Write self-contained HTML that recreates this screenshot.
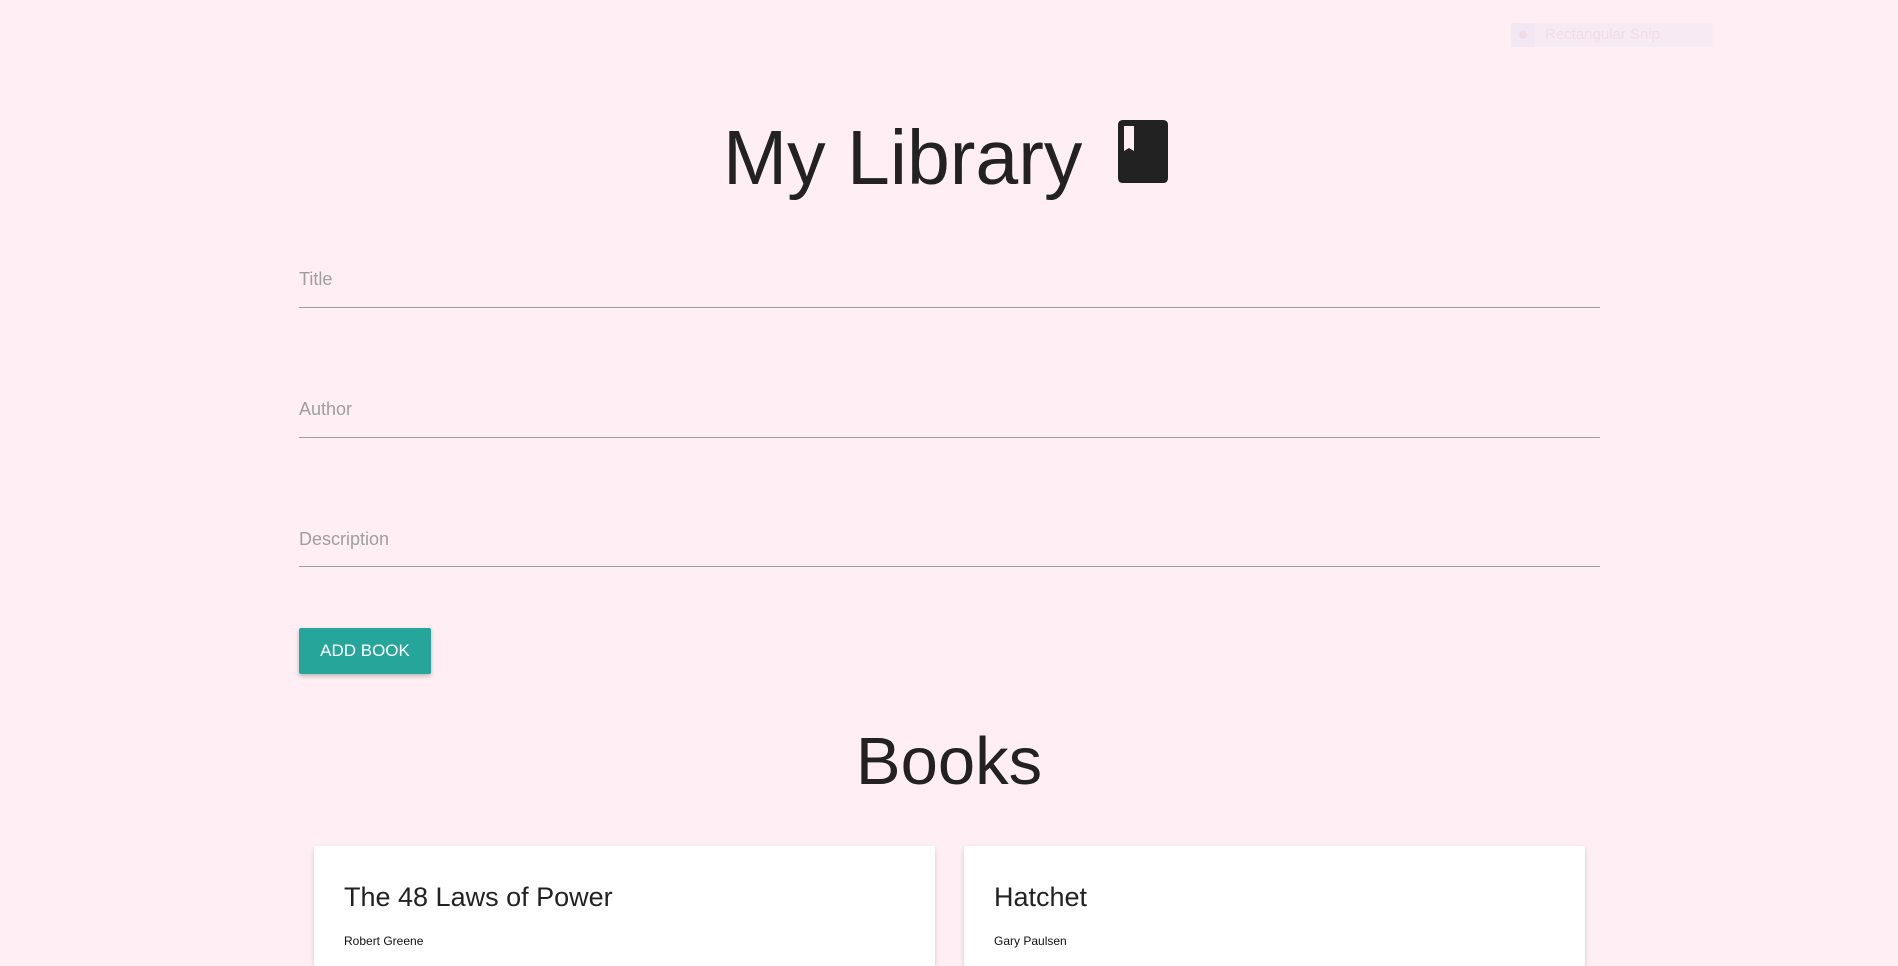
<!DOCTYPE html>
<html><head><meta charset="utf-8"><style>
body{margin:0;width:1898px;height:942px;overflow:hidden;background:#ffeff4;font-family:"Liberation Sans",sans-serif;color:#222;position:relative}
.a{position:absolute}
h1{position:absolute;left:723px;top:103px;margin:0;font-weight:normal;font-size:77px;line-height:110px;white-space:nowrap}
.lbl{position:absolute;left:299px;font-size:18px;color:#9e9e9e}
.line{position:absolute;left:299px;width:1301px;height:1px;background:#9e9e9e}
.btn{position:absolute;left:299px;top:628px;width:132px;height:46px;background:#26a69a;color:#fff;font-size:17px;line-height:46px;text-align:center;border-radius:2px;box-shadow:0 2px 4px rgba(0,0,0,.25)}
.card{position:absolute;top:846px;width:621px;height:120px;background:#fff;border-radius:2px;box-shadow:0 2px 5px rgba(0,0,0,.16)}
.card .t{position:absolute;left:30px;top:36px;font-size:27px;color:#222}
.card .s{position:absolute;left:30px;top:88px;font-size:12px;color:#111}
</style></head><body>
<div class="a" style="left:1511px;top:23px;width:202px;height:24px;background:#f7eaf2"></div>
<div class="a" style="left:1511px;top:23px;width:24px;height:24px;background:#f1e8f3"></div>
<div class="a" style="left:1519px;top:31px;width:8px;height:8px;border-radius:50%;background:#f2dbe5"></div>
<div class="a" style="left:1545px;top:26px;font-size:15px;color:#f0dde6">Rectangular Snip</div>
<h1>My Library</h1>
<svg class="a" style="left:1118px;top:120px" width="50" height="63" viewBox="0 0 50 63"><path d="M5 0H45Q50 0 50 5V58Q50 63 45 63H5Q0 63 0 58V5Q0 0 5 0Z M6 6V31L11 28L16 31V6Z" fill="#222" fill-rule="evenodd"/></svg>
<div class="lbl" style="top:269px">Title</div><div class="line" style="top:307px"></div>
<div class="lbl" style="top:399px">Author</div><div class="line" style="top:437px"></div>
<div class="lbl" style="top:529px">Description</div><div class="line" style="top:566px"></div>
<div class="btn">ADD BOOK</div>
<div class="a" style="left:0;width:1898px;text-align:center;top:722px;font-size:67px;line-height:80px">Books</div>
<div class="card" style="left:314px"><div class="t">The 48 Laws of Power</div><div class="s">Robert Greene</div></div>
<div class="card" style="left:964px"><div class="t">Hatchet</div><div class="s">Gary Paulsen</div></div>
</body></html>
